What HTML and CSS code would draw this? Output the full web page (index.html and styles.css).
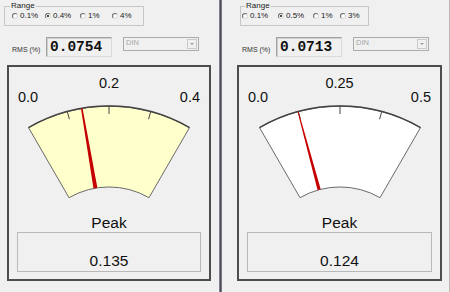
FILE: index.html
```html
<!DOCTYPE html>
<html lang="en">
<head>
  <meta charset="UTF-8">
  <meta name="viewport" content="width=device-width, initial-scale=1.0">
  <title>Level meters</title>
  <link rel="stylesheet" href="styles.css">
</head>
<body>
  <div class="screen">
    <div class="panel panel-left">
      <fieldset class="range">
        <legend>Range</legend>
        <div class="radios">
          <label class="opt"><span class="radio"></span>0.1%</label>
          <label class="opt"><span class="radio on"></span>0.4%</label>
          <label class="opt"><span class="radio"></span>1%</label>
          <label class="opt"><span class="radio"></span>4%</label>
        </div>
      </fieldset>
      <div class="rms-row">
        <span class="rms-label">RMS (%)</span>
        <span class="rms-value">0.0754</span>
        <span class="combo"><span class="combo-text">DIN</span><span class="combo-btn"></span></span>
      </div>
      <div class="meter">
        <div class="scale"><span>0.0</span><span class="mid">0.2</span><span>0.4</span></div>
        <svg class="dial" width="200" height="96" viewBox="0 0 200 96">
          <path class="face yellow" d="M19.5 22.6 A161 161 0 0 1 180.5 22.6 L140 92.7 A80 80 0 0 0 60 92.7 Z"/>
          <path class="rim" d="M19.5 22.6 A161 161 0 0 1 180.5 22.6"/>
          <path class="tick" d="M58.3 6.5 L60.4 14.2 M100 1 L100 9 M141.7 6.5 L139.6 14.2"/>
          <polygon class="needle" points="71.95,3.46 73.53,3.18 88.43,82.81 84.49,83.49"/>
        </svg>
        <div class="peak-label">Peak</div>
        <div class="peak-box">0.135</div>
      </div>
    </div>

    <div class="divider"></div>

    <div class="panel panel-right">
      <fieldset class="range">
        <legend>Range</legend>
        <div class="radios">
          <label class="opt"><span class="radio"></span>0.1%</label>
          <label class="opt"><span class="radio on"></span>0.5%</label>
          <label class="opt"><span class="radio"></span>1%</label>
          <label class="opt"><span class="radio"></span>3%</label>
        </div>
      </fieldset>
      <div class="rms-row">
        <span class="rms-label">RMS (%)</span>
        <span class="rms-value">0.0713</span>
        <span class="combo"><span class="combo-text">DIN</span><span class="combo-btn"></span></span>
      </div>
      <div class="meter">
        <div class="scale"><span>0.0</span><span class="mid">0.25</span><span>0.5</span></div>
        <svg class="dial" width="200" height="96" viewBox="0 0 200 96">
          <path class="face" d="M19.5 22.6 A161 161 0 0 1 180.5 22.6 L140 92.7 A80 80 0 0 0 60 92.7 Z"/>
          <path class="rim" d="M19.5 22.6 A161 161 0 0 1 180.5 22.6"/>
          <path class="tick" d="M58.3 6.5 L60.4 14.2 M100 1 L100 9 M141.7 6.5 L139.6 14.2"/>
          <polygon class="needle" points="57.58,6.68 58.54,6.42 80.70,84.34 77.62,85.18"/>
        </svg>
        <div class="peak-label">Peak</div>
        <div class="peak-box">0.124</div>
      </div>
    </div>
  </div>
</body>
</html>
```

FILE: styles.css
```css
body {
  margin: 0;
  background: #f0f0f0;
  font-family: "Liberation Sans", Arial, sans-serif;
  color: #111;
  overflow: hidden;
}
.screen {
  display: flex;
  height: 292px;
}
.panel {
  box-sizing: border-box;
  padding-top: 1px;
}
.panel-left {
  width: 219px;
  padding-left: 7px;
}
.panel-right {
  width: 228px;
  padding-left: 15px;
  border-right: 1px solid #b9bcb2;
}
.divider {
  width: 3px;
  background: linear-gradient(to right, #9a9aa2, #4e4e5a, #8a8a94);
}

/* range group */
.range {
  box-sizing: border-box;
  margin: 0;
  border: 1px solid #c6c6c6;
  font-size: 8px;
  line-height: 10px;
  color: #222;
}
.panel-left .range {
  width: 140px;
  margin-left: -3px;
  padding: 0 0 4px 7px;
}
.panel-right .range {
  width: 129px;
  margin-left: 3px;
  padding: 0 0 4px 1px;
}
.range legend {
  padding: 0 1px;
}
.panel-left .range legend {
  margin-left: -2px;
}
.panel-right .range legend {
  margin-left: 3px;
}
.radios {
  display: grid;
  height: 10px;
}
.panel-left .radios {
  grid-template-columns: 33px 35px 32px auto;
}
.panel-right .radios {
  grid-template-columns: 36px 35px 27px auto;
}
.opt {
  display: flex;
  align-items: center;
  gap: 2px;
}
.radio {
  box-sizing: border-box;
  width: 6px;
  height: 6px;
  border-radius: 50%;
  border: 1px solid;
  border-color: #6e6e6e #dcdcdc #dcdcdc #6e6e6e;
  background: #fafafa;
  display: flex;
  align-items: center;
  justify-content: center;
}
.radio.on::after {
  content: "";
  width: 2px;
  height: 2px;
  border-radius: 50%;
  background: #111;
}

/* rms row */
.rms-row {
  display: flex;
  align-items: flex-start;
  margin: 11px 0 0 5px;
}
.rms-label {
  width: 34px;
  margin-top: 8px;
  font-size: 7px;
  line-height: 10px;
  color: #333;
}
.rms-value {
  box-sizing: border-box;
  width: 66px;
  height: 20px;
  padding: 1px 0 0 3px;
  border: 1px solid;
  border-color: #a2a2a2 #dadada #dadada #a2a2a2;
  box-shadow: inset 1px 1px 0 #cfcfcf;
  font-family: "Liberation Mono", "Courier New", monospace;
  font-weight: bold;
  font-size: 14.5px;
  line-height: 16px;
  color: #111;
}
.combo {
  box-sizing: border-box;
  display: flex;
  justify-content: space-between;
  width: 76px;
  height: 14px;
  margin-left: 11px;
  border: 1px solid #acacac;
}
.combo-text {
  padding: 1px 0 0 2px;
  font-size: 7.5px;
  line-height: 8px;
  color: #a6a6a6;
}
.combo-btn {
  box-sizing: border-box;
  width: 10px;
  height: 10px;
  margin: 1px;
  border: 1px solid #cacaca;
  display: flex;
  align-items: center;
  justify-content: center;
}
.combo-btn::after {
  content: "";
  border-left: 2px solid transparent;
  border-right: 2px solid transparent;
  border-top: 2px solid #9a9a9a;
}

/* meter */
.meter {
  box-sizing: border-box;
  height: 216px;
  margin-top: 8px;
  border: 2px solid #4d4d4d;
}
.panel-left .meter {
  width: 204px;
}
.panel-right .meter {
  width: 205px;
}
.scale {
  display: flex;
  justify-content: space-between;
  align-items: flex-end;
  height: 30px;
  margin-top: 8px;
  padding: 0 9px;
  font-size: 14.5px;
  line-height: 16px;
}
.scale .mid {
  align-self: flex-start;
}
.dial {
  display: block;
  margin: 0 auto;
}
.face {
  fill: #fff;
  stroke: #6a6a6a;
  stroke-width: 1;
}
.face.yellow {
  fill: #ffffcc;
}
.rim {
  fill: none;
  stroke: #444;
  stroke-width: 1.5;
}
.tick {
  stroke: #444;
  stroke-width: 1;
}
.needle {
  fill: #c40000;
}
.peak-label {
  margin-top: 13px;
  text-align: center;
  font-size: 15.5px;
  line-height: 18px;
}
.peak-box {
  box-sizing: border-box;
  height: 40px;
  margin: 0 8px;
  padding-top: 19px;
  border: 1px solid #b9b9b9;
  text-align: center;
  font-size: 15.5px;
  line-height: 18px;
}
```
